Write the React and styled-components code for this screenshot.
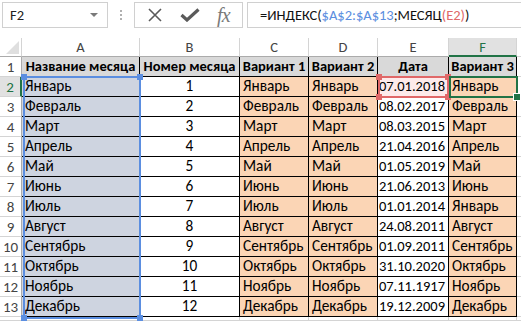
import React from "react";
import styled, { createGlobalStyle, css } from "styled-components";

const GlobalStyle = createGlobalStyle`
  html, body {
    margin: 0;
    padding: 0;
    background: #fff;
  }
  body {
    width: 521px;
    height: 321px;
    overflow: hidden;
    font-family: Carlito, Calibri, Lato, "Liberation Sans", sans-serif;
  }
`;

const GREEN = "#217346";
const BLUE = "#5b8ee0";
const RED = "#e06868";

const Page = styled.div`
  width: 521px;
  height: 321px;
  display: flex;
  flex-direction: column;
  background: #fff;
  overflow: hidden;
`;

const FormulaBar = styled.div`
  display: flex;
  align-items: stretch;
  height: 26px;
  margin: 2px 0 10px 2px;
`;

const NameBox = styled.div`
  width: 106px;
  box-sizing: border-box;
  border: 1px solid #d0d0d0;
  display: flex;
  align-items: center;
  justify-content: space-between;
  padding: 0 9px 0 7px;
  font-size: 14.5px;
  color: #222;
`;

const Arrow = styled.span`
  width: 0;
  height: 0;
  border-left: 4px solid transparent;
  border-right: 4px solid transparent;
  border-top: 4px solid #7a7a7a;
`;

const Grip = styled.div`
  width: 26px;
  display: flex;
  flex-direction: column;
  align-items: center;
  justify-content: center;
  gap: 2px;
  span {
    width: 2px;
    height: 2px;
    background: #b0b0b0;
  }
`;

const Buttons = styled.div`
  width: 109px;
  box-sizing: border-box;
  border: 1px solid #d0d0d0;
  display: flex;
  align-items: center;
  justify-content: space-around;
  padding: 0 4px;
`;

const Fx = styled.span`
  font-family: "Liberation Serif", "DejaVu Serif", serif;
  font-style: italic;
  font-size: 20px;
  color: #7a7a7a;
  letter-spacing: -1px;
`;

const FormulaInput = styled.div`
  flex: 1;
  margin-left: 4px;
  box-sizing: border-box;
  border: 1px solid #d0d0d0;
  border-right: none;
  display: flex;
  align-items: center;
  padding-left: 12px;
  font-size: 14.5px;
  color: #111;
  white-space: nowrap;
`;

const Ref = styled.span`
  color: ${(p) => p.$color};
`;

const Stack = styled.div`
  flex: 1;
  display: grid;
  > * {
    grid-area: 1 / 1;
  }
`;

const gridTemplate = css`
  display: grid;
  grid-template-columns: 22px 118px 100px 69px 69px 71px 68px 1fr;
  grid-template-rows: 19px repeat(13, 20px) 1fr;
`;

const Sheet = styled.div`
  ${gridTemplate}
`;

const Overlay = styled.div`
  ${gridTemplate}
  position: relative;
  z-index: 2;
  pointer-events: none;
`;

const Corner = styled.div`
  position: relative;
  border-right: 1px solid #d4d4d4;
  border-bottom: 1px solid #ababab;
  &::after {
    content: "";
    position: absolute;
    right: 2px;
    bottom: 2px;
    border-left: 13px solid transparent;
    border-bottom: 13px solid #dfdfdf;
  }
`;

const ColHead = styled.div`
  display: flex;
  align-items: center;
  justify-content: center;
  font-size: 14.5px;
  color: #444;
  border-right: 1px solid #d4d4d4;
  border-bottom: 1px solid #ababab;
  ${(p) =>
    p.$active &&
    css`
      background: #e1e1e1;
      color: ${GREEN};
      border-bottom: 2px solid ${GREEN};
    `}
`;

const RowHead = styled.div`
  display: flex;
  align-items: center;
  justify-content: center;
  font-size: 15px;
  color: #444;
  border-right: 1px solid #ababab;
  border-bottom: 1px solid #d4d4d4;
  ${(p) =>
    p.$active &&
    css`
      background: #e1e1e1;
      color: ${GREEN};
      border-right: 2px solid ${GREEN};
    `}
`;

const tones = {
  head: "#d9d9d9",
  name: "#ced4e0",
  plain: "#ffffff",
  orange: "#fbd5b5",
  pink: "#fdeaea",
};

const Cell = styled.div`
  display: flex;
  align-items: flex-end;
  justify-content: ${(p) => p.$align || "flex-start"};
  padding: 0 3px 1px 3px;
  overflow: hidden;
  white-space: nowrap;
  font-size: ${(p) => (p.$bold || p.$compact ? "14.5px" : "15.3px")};
  line-height: 18px;
  color: #000;
  font-weight: ${(p) => (p.$bold ? 700 : 400)};
  background: ${(p) => tones[p.$tone] || "#fff"};
  border-right: 1px solid #000;
  border-bottom: 1px solid #000;
`;

const Blank = styled.div`
  border-bottom: 1px solid #d4d4d4;
  border-right: ${(p) => (p.$ruled ? "1px solid #d4d4d4" : "none")};
`;

const Outline = styled.div`
  position: relative;
  grid-column: ${(p) => p.$col};
  grid-row: ${(p) => p.$row};
  margin: ${(p) => p.$inset};
  border: 2px solid ${(p) => p.$color};
`;

const Handle = styled.span`
  position: absolute;
  width: 6px;
  height: 6px;
  background: ${(p) => p.$color};
  ${(p) => (p.$top ? "top: -4px;" : "bottom: -4px;")}
  ${(p) => (p.$left ? "left: -4px;" : "right: -4px;")}
  ${(p) => p.$ring && "box-shadow: 0 0 0 1px #fff;"}
`;

const headers = ["Название месяца", "Номер месяца", "Вариант 1", "Вариант 2", "Дата", "Вариант 3"];

const rows = [
  ["Январь", 1, "Январь", "Январь", "07.01.2018", "Январь"],
  ["Февраль", 2, "Февраль", "Февраль", "08.02.2017", "Февраль"],
  ["Март", 3, "Март", "Март", "08.03.2015", "Март"],
  ["Апрель", 4, "Апрель", "Апрель", "21.04.2016", "Апрель"],
  ["Май", 5, "Май", "Май", "01.05.2019", "Май"],
  ["Июнь", 6, "Июнь", "Июнь", "21.06.2013", "Июнь"],
  ["Июль", 7, "Июль", "Июль", "01.01.2014", "Январь"],
  ["Август", 8, "Август", "Август", "24.08.2011", "Август"],
  ["Сентябрь", 9, "Сентябрь", "Сентябрь", "01.09.2011", "Сентябрь"],
  ["Октябрь", 10, "Октябрь", "Октябрь", "31.10.2020", "Октябрь"],
  ["Ноябрь", 11, "Ноябрь", "Ноябрь", "07.11.1917", "Ноябрь"],
  ["Декабрь", 12, "Декабрь", "Декабрь", "19.12.2009", "Декабрь"],
];

const letters = ["A", "B", "C", "D", "E", "F"];

const cellProps = (col, rowIdx) => {
  if (col === 0) return { $tone: "name" };
  if (col === 1) return { $tone: "plain", $align: "center" };
  if (col === 4) return { $tone: rowIdx === 0 ? "pink" : "plain", $align: "flex-end", $compact: true };
  return { $tone: "orange" };
};

const CrossIcon = () => (
  <svg width="16" height="16" viewBox="0 0 16 16">
    <path d="M2 2 L14 14 M14 2 L2 14" stroke="#5a5a5a" strokeWidth="1.6" fill="none" />
  </svg>
);

const CheckIcon = () => (
  <svg width="20" height="14" viewBox="0 0 20 14">
    <path d="M1.5 7 L7 12 L18.5 1.5" stroke="#5a5a5a" strokeWidth="3.2" fill="none" />
  </svg>
);

export default function App() {
  return (
    <Page>
      <GlobalStyle />
      <FormulaBar>
        <NameBox>
          F2
          <Arrow />
        </NameBox>
        <Grip>
          <span />
          <span />
          <span />
        </Grip>
        <Buttons>
          <CrossIcon />
          <CheckIcon />
          <Fx>fx</Fx>
        </Buttons>
        <FormulaInput>
          =ИНДЕКС(<Ref $color={BLUE}>$A$2:$A$13</Ref>;МЕСЯЦ<Ref $color={RED}>(E2)</Ref>)
        </FormulaInput>
      </FormulaBar>

      <Stack>
        <Sheet>
          <Corner />
          {letters.map((l) => (
            <ColHead key={l} $active={l === "F"}>
              {l}
            </ColHead>
          ))}
          <Blank />

          <RowHead>1</RowHead>
          {headers.map((h) => (
            <Cell key={h} $tone="head" $bold $align="center">
              {h}
            </Cell>
          ))}
          <Blank />

          {rows.map((r, ri) => (
            <React.Fragment key={ri}>
              <RowHead $active={ri === 0}>{ri + 2}</RowHead>
              {r.map((v, ci) => (
                <Cell key={ci} {...cellProps(ci, ri)}>
                  {v}
                </Cell>
              ))}
              <Blank />
            </React.Fragment>
          ))}

          <RowHead />
          {letters.map((l) => (
            <Blank key={l} $ruled />
          ))}
          <Blank />
        </Sheet>

        <Overlay>
          <Outline $col="2 / 3" $row="3 / 15" $inset="-1px -1px -2px 1px" $color={BLUE}>
            <Handle $color={BLUE} $top $left />
            <Handle $color={BLUE} $top />
            <Handle $color={BLUE} $left />
            <Handle $color={BLUE} />
          </Outline>
          <Outline $col="6 / 7" $row="3 / 4" $inset="-1px 0 -1px 0" $color={RED}>
            <Handle $color={RED} $top $left />
            <Handle $color={RED} $top />
            <Handle $color={RED} $left />
            <Handle $color={RED} />
          </Outline>
          <Outline $col="7 / 8" $row="3 / 4" $inset="-1px -1px -1px 0" $color={GREEN}>
            <Handle $color={GREEN} $ring />
          </Outline>
        </Overlay>
      </Stack>
    </Page>
  );
}
